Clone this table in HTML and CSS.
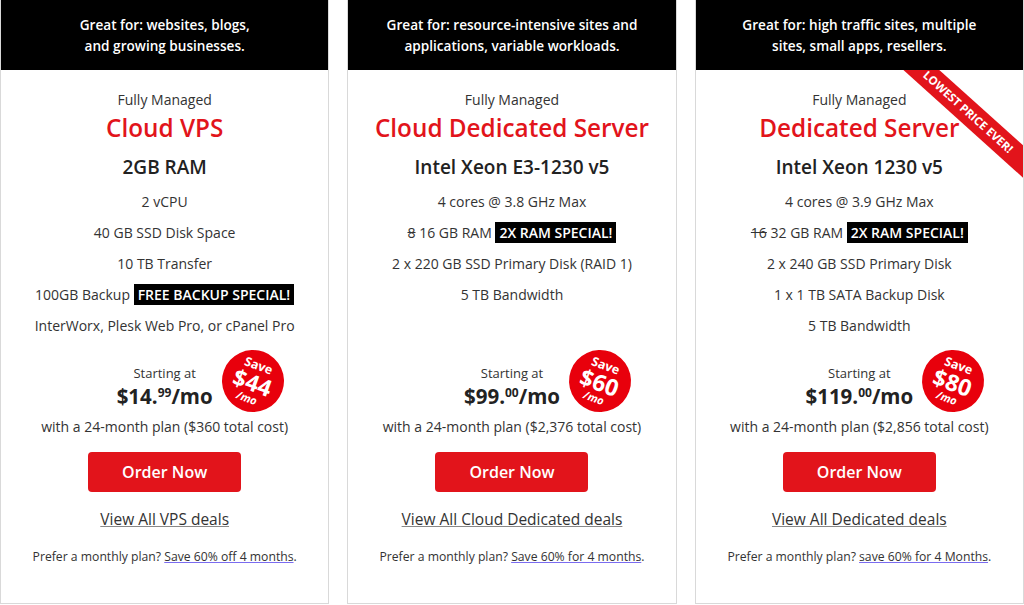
FILE: index.html
```html
<html>
  <head>
    <link rel="stylesheet" href="styles.css">
  </head>
  <body>
    <div class='plans'>
      <div class='plan'>
        <div class='plan-head'>Great for: websites, blogs,<br>and growing businesses.</div>
        <div class='plan-body'>
          <div class='kicker'>Fully Managed</div>
          <div class='title'>Cloud VPS</div>
          <div class='spec'>2GB RAM</div>
          <ul class='features'>
            <li>2 vCPU</li>
            <li>40 GB SSD Disk Space</li>
            <li>10 TB Transfer</li>
            <li>100GB Backup <span class='special'>FREE BACKUP SPECIAL!</span></li>
            <li>InterWorx, Plesk Web Pro, or cPanel Pro</li>
          </ul>
          <div class='price-box'>
            <div class='starting'>Starting at</div>
            <div class='price'>$14.<sup>99</sup>/mo</div>
            <div class='save'><span class='save-word'>Save</span><span class='save-amt'>$44</span><span class='save-per'>/mo</span></div>
          </div>
          <div class='term'>with a 24-month plan ($360 total cost)</div>
          <a class='order' href='#'>Order Now</a>
          <a class='view-all' href='#'>View All VPS deals</a>
          <div class='monthly'>Prefer a monthly plan? <a href='#'>Save 60% off 4 months</a>.</div>
        </div>
      </div>

      <div class='plan'>
        <div class='plan-head'>Great for: resource-intensive sites and<br>applications, variable workloads.</div>
        <div class='plan-body'>
          <div class='kicker'>Fully Managed</div>
          <div class='title'>Cloud Dedicated Server</div>
          <div class='spec'>Intel Xeon E3-1230 v5</div>
          <ul class='features'>
            <li>4 cores @ 3.8 GHz Max</li>
            <li><s>8</s> 16 GB RAM <span class='special'>2X RAM SPECIAL!</span></li>
            <li>2 x 220 GB SSD Primary Disk (RAID 1)</li>
            <li>5 TB Bandwidth</li>
          </ul>
          <div class='price-box'>
            <div class='starting'>Starting at</div>
            <div class='price'>$99.<sup>00</sup>/mo</div>
            <div class='save'><span class='save-word'>Save</span><span class='save-amt'>$60</span><span class='save-per'>/mo</span></div>
          </div>
          <div class='term'>with a 24-month plan ($2,376 total cost)</div>
          <a class='order' href='#'>Order Now</a>
          <a class='view-all' href='#'>View All Cloud Dedicated deals</a>
          <div class='monthly'>Prefer a monthly plan? <a href='#'>Save 60% for 4 months</a>.</div>
        </div>
      </div>

      <div class='plan'>
        <div class='plan-head'>Great for: high traffic sites, multiple<br>sites, small apps, resellers.</div>
        <div class='ribbon'>LOWEST PRICE EVER!</div>
        <div class='plan-body'>
          <div class='kicker'>Fully Managed</div>
          <div class='title'>Dedicated Server</div>
          <div class='spec'>Intel Xeon 1230 v5</div>
          <ul class='features'>
            <li>4 cores @ 3.9 GHz Max</li>
            <li><s>16</s> 32 GB RAM <span class='special'>2X RAM SPECIAL!</span></li>
            <li>2 x 240 GB SSD Primary Disk</li>
            <li>1 x 1 TB SATA Backup Disk</li>
            <li>5 TB Bandwidth</li>
          </ul>
          <div class='price-box'>
            <div class='starting'>Starting at</div>
            <div class='price'>$119.<sup>00</sup>/mo</div>
            <div class='save'><span class='save-word'>Save</span><span class='save-amt'>$80</span><span class='save-per'>/mo</span></div>
          </div>
          <div class='term'>with a 24-month plan ($2,856 total cost)</div>
          <a class='order' href='#'>Order Now</a>
          <a class='view-all' href='#'>View All Dedicated deals</a>
          <div class='monthly'>Prefer a monthly plan? <a href='#'>save 60% for 4 Months</a>.</div>
        </div>
      </div>
    </div>
  </body>
</html>
```

FILE: styles.css
```css
body {
  margin: 0;
  font-family: "Open Sans", "Liberation Sans", sans-serif;
  color: #333;
  background: #fff;
}

.plans {
  display: grid;
  grid-template-columns: repeat(3, 1fr);
  column-gap: 18px;
}

.plan {
  position: relative;
  overflow: hidden;
  border: 1px solid #d9d9d9;
  border-top: none;
  height: 603px;
}

.plan-head {
  position: relative;
  z-index: 1;
  background: #000;
  color: #fff;
  font-size: 13.6px;
  font-weight: 600;
  line-height: 21px;
  height: 70px;
  box-sizing: border-box;
  padding-top: 14px;
  text-align: center;
}

.ribbon {
  position: absolute;
  left: 172px;
  top: 100px;
  width: 200px;
  height: 24px;
  line-height: 24px;
  background: #e2141b;
  color: #fff;
  font-size: 11.5px;
  font-weight: 700;
  text-align: center;
  transform: rotate(42deg);
}

.plan-body {
  display: flex;
  flex-direction: column;
  align-items: center;
  text-align: center;
  padding-top: 20px;
}

.kicker {
  font-size: 14px;
  line-height: 20px;
}

.title {
  color: #e2141b;
  font-size: 24.3px;
  font-weight: 600;
  line-height: 36px;
}

.spec {
  margin-top: 8px;
  font-size: 19px;
  font-weight: 600;
  line-height: 26px;
  color: #222;
}

.features {
  list-style: none;
  margin: 6px 0 0;
  padding: 0;
  min-height: 155px;
  font-size: 14px;
  line-height: 31px;
}

.special {
  background: #000;
  color: #fff;
  font-weight: 600;
  padding: 1px 4px;
}

.price-box {
  position: relative;
  margin-top: 23px;
}

.starting {
  font-size: 13px;
  line-height: 18px;
}

.price {
  font-size: 20.5px;
  font-weight: 700;
  line-height: 28px;
  color: #222;
}

.price sup {
  font-size: 12px;
  vertical-align: 7px;
  line-height: 0;
}

.save {
  position: absolute;
  left: calc(100% + 9px);
  top: -14px;
  width: 62px;
  height: 62px;
  border-radius: 50%;
  background: #e8000c;
  color: #fff;
  font-weight: 700;
  display: flex;
  flex-direction: column;
  align-items: center;
  justify-content: center;
  transform: rotate(20deg);
}

.save-word {
  font-size: 12.5px;
  line-height: 13px;
}

.save-amt {
  font-size: 23px;
  line-height: 22px;
}

.save-per {
  font-size: 11px;
  line-height: 12px;
  font-style: italic;
}

.term {
  margin-top: 7px;
  font-size: 14px;
  line-height: 20px;
}

.order {
  margin-top: 15px;
  width: 153px;
  height: 40px;
  line-height: 40px;
  background: #e2141b;
  border-radius: 4px;
  color: #fff;
  font-size: 16px;
  font-weight: 600;
  text-decoration: none;
}

.view-all {
  margin-top: 15px;
  font-size: 15.5px;
  line-height: 24px;
  color: #333;
  text-decoration-color: #888;
}

.monthly {
  margin-top: 17px;
  font-size: 12.2px;
  line-height: 18px;
}

.monthly a {
  color: #333;
  text-decoration-color: #7b6cf0;
}
```
